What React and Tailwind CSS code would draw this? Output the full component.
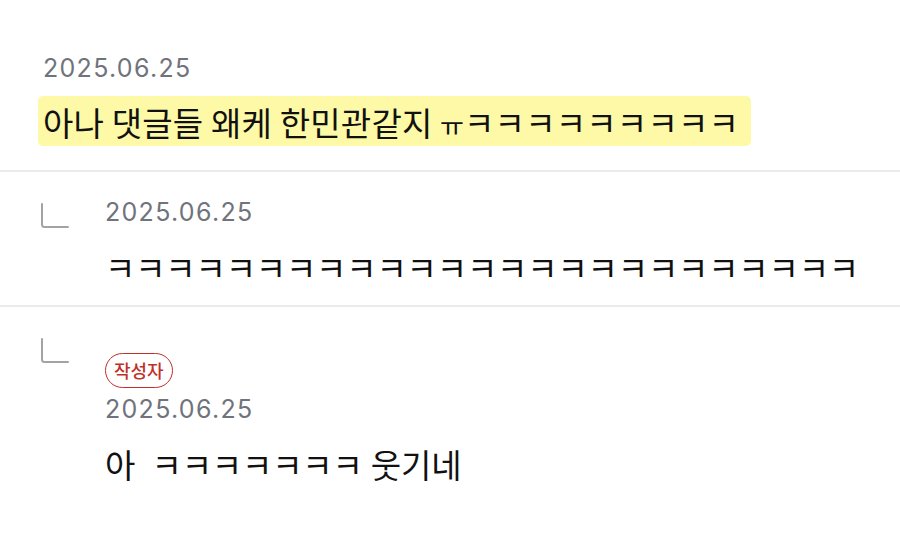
import React from "react"

const sans = "font-['Inter','Noto_Sans','Noto_Sans_CJK_KR',sans-serif]"
const kr = "font-['Noto_Sans_CJK_KR','Noto_Sans',sans-serif]"

const ReplyIcon = () => (
    <svg width="30" height="26" viewBox="0 0 30 26" fill="none">
        <path d="M2 1 V21.5 Q2 24 4.5 24 H28" stroke="#a3a3a3" strokeWidth="2" strokeLinecap="round" />
    </svg>
)

const DateText = ({ children }) => (
    <div className={`${sans} text-[25px] leading-[30px] tracking-[1.3px] text-[#70737c]`}>{children}</div>
)

const Reply = ({ badge, date, text, last }) => (
    <div className={`flex pl-[40px] pt-[25px] ${last ? "pb-8" : "pb-[18px] border-b-2 border-[#ebebeb]"}`}>
        <div className="w-[65px] shrink-0 pt-[6px]">
            <ReplyIcon />
        </div>
        <div className="flex flex-col">
            {badge && (
                <div className="mt-[21px] mb-[6px]">
                    <span className={`${kr} inline-flex items-center h-[35px] px-[8px] rounded-full border-[1.5px] border-[#c0302b] text-[#c0302b] text-[18px] font-medium`}>
                        작성자
                    </span>
                </div>
            )}
            <DateText>{date}</DateText>
            <div className={`${kr} text-[33px] leading-[40px] tracking-[-0.2px] [word-spacing:1px] text-[#111] mt-[20px] whitespace-pre`}>{text}</div>
        </div>
    </div>
)

export default function App() {
    return (
        <div className="w-[900px] h-[553px] bg-white overflow-hidden">
            <div className="pt-[53px] pl-[43px] pb-[24px] border-b-2 border-[#ebebeb]">
                <DateText>2025.06.25</DateText>
                <div className="mt-[13px] -ml-[5px]">
                    <span className={`${kr} inline-block bg-[#fdf9a6] rounded-[5px] pl-[5px] pr-[12px] h-[50px] pt-[2px] leading-[48px] text-[33px] tracking-[0.2px] text-[#111] whitespace-pre`}>
                        아나 댓글들 왜케 한민관같지 <span className="text-[26px] tracking-normal">ㅠ</span>ㅋㅋㅋㅋㅋㅋㅋㅋㅋ
                    </span>
                </div>
            </div>
            <Reply date="2025.06.25" text="ㅋㅋㅋㅋㅋㅋㅋㅋㅋㅋㅋㅋㅋㅋㅋㅋㅋㅋㅋㅋㅋㅋㅋㅋㅋ" />
            <Reply badge date="2025.06.25" text="아  ㅋㅋㅋㅋㅋㅋㅋ 웃기네" last />
        </div>
    )
}
